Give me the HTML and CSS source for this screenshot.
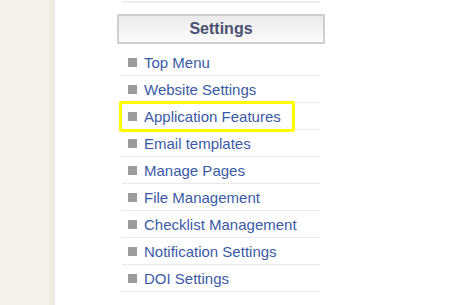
FILE: index.html
```html
<!DOCTYPE html>
<html>
<head>
<meta charset="utf-8">
<link rel="stylesheet" href="styles.css">
</head>
<body>
<div class="page">
  <div class="side"></div>
  <div class="main">
    <div class="topline"></div>
    <div class="panel-title">Settings</div>
    <ul class="menu">
      <li><span class="bullet"></span><a href="#">Top Menu</a></li>
      <li><span class="bullet"></span><a href="#">Website Settings</a></li>
      <li class="marked"><span class="bullet"></span><a href="#">Application Features</a><span class="highlight"></span></li>
      <li><span class="bullet"></span><a href="#">Email templates</a></li>
      <li><span class="bullet"></span><a href="#">Manage Pages</a></li>
      <li><span class="bullet"></span><a href="#">File Management</a></li>
      <li><span class="bullet"></span><a href="#">Checklist Management</a></li>
      <li><span class="bullet"></span><a href="#">Notification Settings</a></li>
      <li><span class="bullet"></span><a href="#">DOI Settings</a></li>
    </ul>
  </div>
</div>
</body>
</html>
```
FILE: styles.css
```css
html, body {
  margin: 0;
  padding: 0;
  background: #ffffff;
  font-family: "Liberation Sans", Arial, sans-serif;
}
.page {
  display: flex;
  min-height: 305px;
}
.side {
  width: 55px;
  flex: none;
  background: linear-gradient(to right, #f5f1ea 0, #f5f1ea 46px, #ece7df 55px);
}
.main {
  padding-left: 62px;
  width: 208px;
}
.topline {
  margin: 1px 0 0 5px;
  width: 198px;
  height: 2px;
  background: #eeeeee;
}
.panel-title {
  margin-top: 11px;
  box-sizing: border-box;
  width: 208px;
  height: 30px;
  border: 2px solid #cfcfcf;
  background: linear-gradient(to bottom, #ebebeb, #fbfbfb);
  color: #4b5070;
  font-weight: bold;
  font-size: 16px;
  line-height: 26px;
  text-align: center;
}
.menu {
  list-style: none;
  margin: 5px 0 0 5px;
  padding: 0;
  width: 198px;
}
.menu li {
  position: relative;
  display: flex;
  align-items: center;
  height: 26px;
  border-bottom: 1px solid #eaeaea;
  padding-left: 6px;
}
.bullet {
  width: 9px;
  height: 9px;
  background: #9b9b9b;
  margin-right: 7px;
  flex: none;
}
.menu a {
  color: #3a5aa6;
  text-decoration: none;
  font-size: 15px;
}
.highlight {
  position: absolute;
  left: -3px;
  top: -2px;
  width: 176px;
  height: 31px;
  box-sizing: border-box;
  border: 3px solid #ffff00;
  border-radius: 2px;
}
```
